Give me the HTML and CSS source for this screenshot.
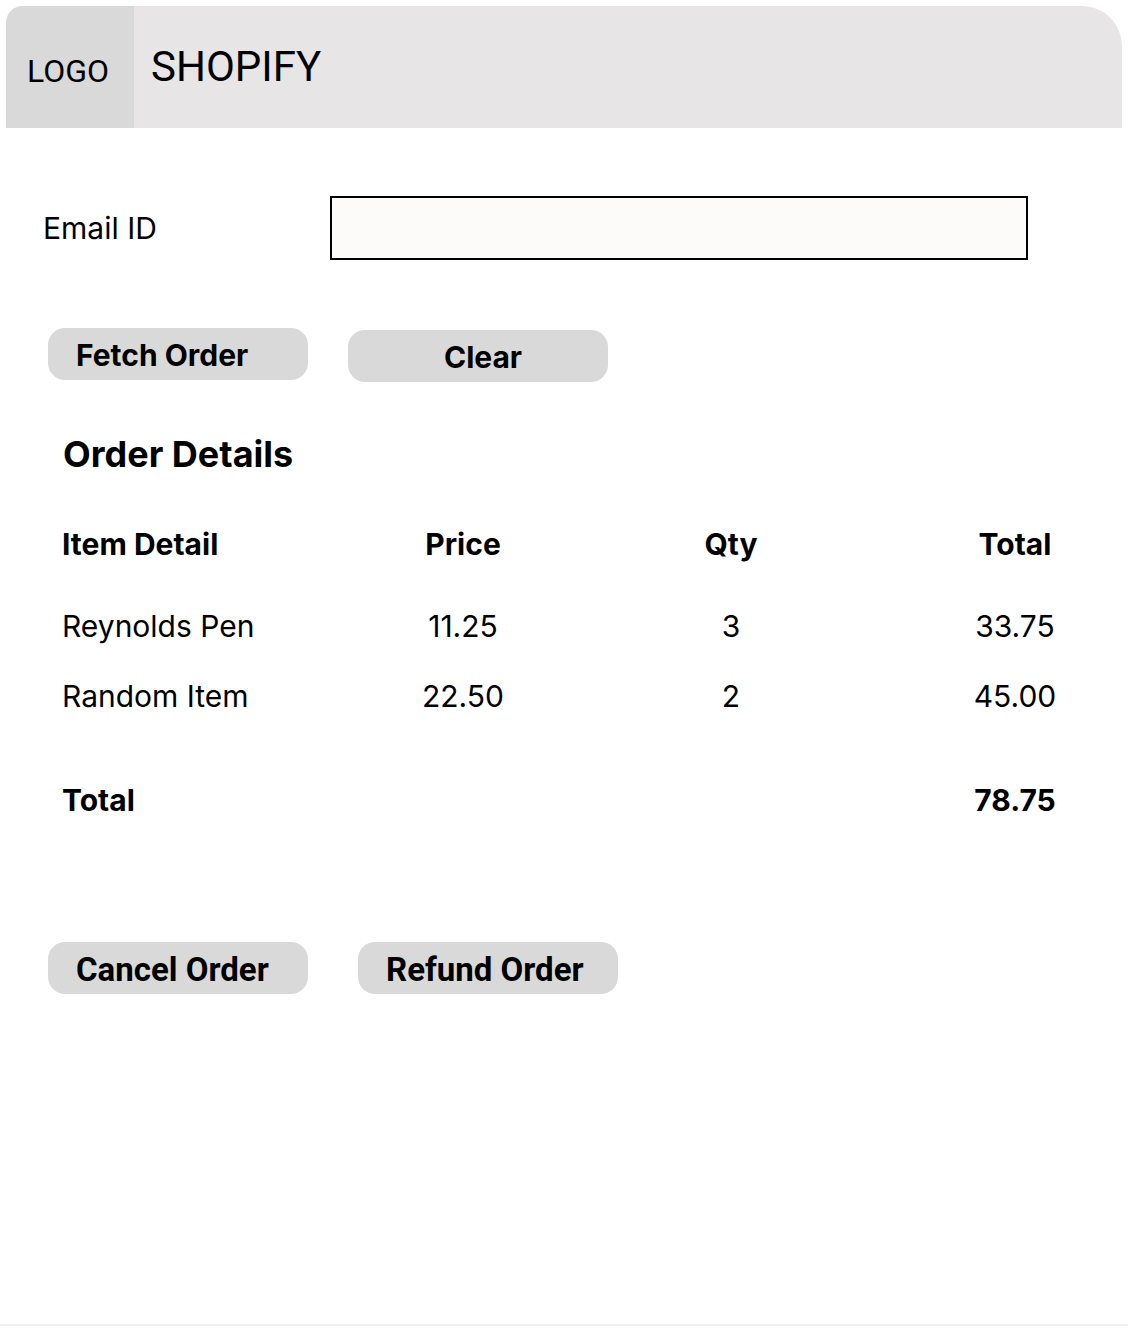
FILE: index.html
```html
<!DOCTYPE html>
<html>
<head>
<meta charset="utf-8">
<link rel="stylesheet" href="styles.css">
</head>
<body>
<div class="page">
  <header class="topbar">
    <div class="logo">LOGO</div>
    <div class="brand">SHOPIFY</div>
  </header>

  <div class="email-row">
    <label class="email-label" for="email">Email ID</label>
    <input class="email-input" id="email" type="text">
  </div>

  <div class="actions">
    <button class="btn btn-left">Fetch Order</button>
    <button class="btn btn-center btn-clear">Clear</button>
  </div>

  <h2 class="section-title">Order Details</h2>

  <div class="table">
    <div class="row head">
      <div class="c-item">Item Detail</div>
      <div class="c-price">Price</div>
      <div class="c-qty">Qty</div>
      <div class="c-total">Total</div>
    </div>
    <div class="row body first">
      <div class="c-item">Reynolds Pen</div>
      <div class="c-price">11.25</div>
      <div class="c-qty">3</div>
      <div class="c-total">33.75</div>
    </div>
    <div class="row body">
      <div class="c-item">Random Item</div>
      <div class="c-price">22.50</div>
      <div class="c-qty">2</div>
      <div class="c-total">45.00</div>
    </div>
    <div class="row grand">
      <div class="c-item">Total</div>
      <div class="c-price"></div>
      <div class="c-qty"></div>
      <div class="c-total">78.75</div>
    </div>
  </div>

  <div class="actions bottom">
    <button class="btn btn-left btn-roboto">Cancel Order</button>
    <button class="btn btn-left btn-roboto btn-refund">Refund Order</button>
  </div>
</div>
</body>
</html>
```

FILE: styles.css
```css
html, body {
  margin: 0;
  padding: 0;
  background: #ffffff;
}

body {
  font-family: "Inter", "Roboto", sans-serif;
  color: #000;
}

.page {
  min-height: 1326px;
  border-bottom: 2px solid #f1f1f2;
  padding-top: 6px;
  box-sizing: border-box;
  overflow: hidden;
}

.topbar {
  margin: 0 6px;
  height: 122px;
  background: #e7e5e6;
  border-radius: 17px 40px 0 0;
  display: flex;
  overflow: hidden;
}

.logo {
  width: 128px;
  background: #d9d9d9;
  font-family: "Roboto", sans-serif;
  font-size: 32px;
  display: flex;
  align-items: center;
  padding-left: 21px;
  padding-top: 8px;
  box-sizing: border-box;
}

.brand {
  font-family: "Roboto", sans-serif;
  font-size: 42px;
  padding-left: 17px;
  display: flex;
  align-items: center;
  padding-bottom: 2px;
}

.email-row {
  display: flex;
  align-items: center;
  margin-top: 68px;
  padding-left: 43px;
  height: 64px;
}

.email-label {
  font-size: 30px;
  width: 287px;
}

.email-input {
  width: 698px;
  height: 64px;
  box-sizing: border-box;
  border: 2px solid #000;
  background: #fcfbfa;
  margin: 0;
  padding: 0 10px;
  font: inherit;
  outline: none;
}

.actions {
  display: flex;
  align-items: flex-start;
  gap: 40px;
  padding-left: 48px;
  margin-top: 68px;
}

.btn {
  width: 260px;
  height: 52px;
  border: none;
  border-radius: 17px;
  background: #d9d9d9;
  font-family: "Inter", sans-serif;
  font-weight: 700;
  font-size: 30px;
  color: #000;
  padding: 2px 0 0 0;
  margin: 0;
  cursor: pointer;
}

.btn-left {
  text-align: left;
  padding-left: 28px;
}

.btn-center {
  text-align: center;
  padding-left: 10px;
}

.btn-clear {
  margin-top: 2px;
}

.btn-roboto {
  font-family: "Roboto", sans-serif;
  font-size: 33px;
}

.btn-refund {
  margin-left: 10px;
}

.section-title {
  margin: 51px 0 0 63px;
  font-size: 36px;
  font-weight: 700;
  line-height: 43px;
}

.table {
  margin-top: 48px;
  padding-left: 62px;
}

.row {
  display: grid;
  grid-template-columns: 300px 202px 334px 60px 114px;
  align-items: center;
  font-size: 30px;
}

.row .c-total {
  grid-column: 5;
  text-align: center;
}

.c-price, .c-qty {
  text-align: center;
}

.head {
  font-weight: 700;
  height: 40px;
}

.body {
  height: 40px;
  margin-top: 30px;
}

.body.first {
  margin-top: 42px;
}

.grand {
  font-weight: 700;
  height: 40px;
  margin-top: 64px;
}

.actions.bottom {
  margin-top: 122px;
}
```
